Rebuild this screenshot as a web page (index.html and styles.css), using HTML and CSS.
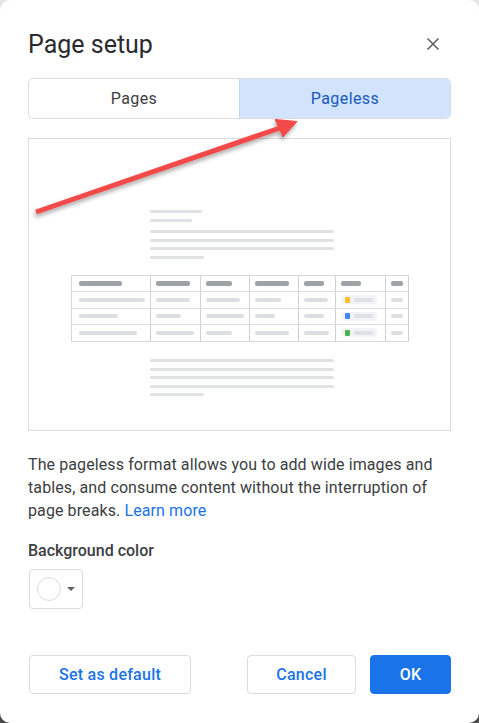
FILE: index.html
```html
<!DOCTYPE html>
<html lang="en">
<head>
<meta charset="utf-8">
<title>Page setup</title>
<link rel="stylesheet" href="styles.css">
</head>
<body>
<div class="dialog">
  <div class="header">
    <h1 class="title">Page setup</h1>
    <button class="close" aria-label="Close">
      <svg width="14" height="14" viewBox="0 0 14 14"><path d="M1.5 1.5 L12.5 12.5 M12.5 1.5 L1.5 12.5" stroke="#5f6368" stroke-width="1.6" fill="none"/></svg>
    </button>
  </div>

  <div class="tabs">
    <div class="tab">Pages</div>
    <div class="tab active">Pageless</div>
  </div>

  <div class="preview">
    <div class="lines lines-top">
      <div class="ln" style="width:52px"></div>
      <div class="ln" style="width:42px"></div>
      <div class="gap"></div>
      <div class="ln" style="width:184px"></div>
      <div class="ln" style="width:184px"></div>
      <div class="ln" style="width:184px"></div>
      <div class="ln" style="width:54px"></div>
    </div>

    <div class="table">
      <div class="cell first"><span class="hb" style="width:43px"></span></div>
      <div class="cell"><span class="hb" style="width:34px"></span></div>
      <div class="cell"><span class="hb" style="width:26px"></span></div>
      <div class="cell"><span class="hb" style="width:34px"></span></div>
      <div class="cell"><span class="hb" style="width:20px"></span></div>
      <div class="cell"><span class="hb" style="width:20px"></span></div>
      <div class="cell"><span class="hb" style="width:12px"></span></div>

      <div class="cell first"><span class="bb" style="width:66px"></span></div>
      <div class="cell"><span class="bb" style="width:34px"></span></div>
      <div class="cell"><span class="bb" style="width:34px"></span></div>
      <div class="cell"><span class="bb" style="width:26px"></span></div>
      <div class="cell"><span class="bb" style="width:24px"></span></div>
      <div class="cell"><span class="chip"><i class="sq yellow"></i><span class="cb"></span></span></div>
      <div class="cell"><span class="bb" style="width:12px"></span></div>

      <div class="cell first"><span class="bb" style="width:39px"></span></div>
      <div class="cell"><span class="bb" style="width:25px"></span></div>
      <div class="cell"><span class="bb" style="width:38px"></span></div>
      <div class="cell"><span class="bb" style="width:20px"></span></div>
      <div class="cell"><span class="bb" style="width:20px"></span></div>
      <div class="cell"><span class="chip"><i class="sq blue"></i><span class="cb"></span></span></div>
      <div class="cell"><span class="bb" style="width:12px"></span></div>

      <div class="cell first"><span class="bb" style="width:58px"></span></div>
      <div class="cell"><span class="bb" style="width:38px"></span></div>
      <div class="cell"><span class="bb" style="width:26px"></span></div>
      <div class="cell"><span class="bb" style="width:34px"></span></div>
      <div class="cell"><span class="bb" style="width:25px"></span></div>
      <div class="cell"><span class="chip"><i class="sq green"></i><span class="cb"></span></span></div>
      <div class="cell"><span class="bb" style="width:12px"></span></div>
    </div>

    <div class="lines lines-bottom">
      <div class="ln" style="width:184px"></div>
      <div class="ln" style="width:184px"></div>
      <div class="ln" style="width:184px"></div>
      <div class="ln" style="width:184px"></div>
      <div class="ln" style="width:54px"></div>
    </div>
  </div>

  <p class="desc">The pageless format allows you to add wide images and tables, and consume content without the interruption of page breaks. <a href="#" class="link">Learn more</a></p>

  <div class="label">Background color</div>
  <button class="color-btn" aria-label="Background color">
    <span class="swatch"></span>
    <span class="caret"></span>
  </button>

  <div class="footer">
    <button class="btn outline">Set as default</button>
    <div class="spacer"></div>
    <button class="btn outline">Cancel</button>
    <button class="btn primary">OK</button>
  </div>

  <svg class="arrow" width="479" height="723" viewBox="0 0 479 723">
    <defs>
      <filter id="sh" x="-20%" y="-50%" width="140%" height="200%">
        <feDropShadow dx="-1" dy="3" stdDeviation="2" flood-color="#000" flood-opacity="0.35"/>
      </filter>
    </defs>
    <g filter="url(#sh)" fill="#f24848" stroke="#f24848">
      <line x1="36" y1="212" x2="280" y2="128" stroke-width="5"/>
      <polygon points="297,121.5 275,119.5 283,137" stroke-width="1" stroke-linejoin="round"/>
    </g>
  </svg>
</div>
</body>
</html>
```

FILE: styles.css
```css
html {
  background: linear-gradient(#e6e6e6, #9a9a9a 40%, #4a4a4a);
}
body {
  margin: 0;
  font-family: Roboto, "Liberation Sans", Arial, sans-serif;
  color: #3c4043;
}
.dialog {
  position: relative;
  box-sizing: border-box;
  width: 479px;
  height: 723px;
  background: #fff;
  border-radius: 10px;
  padding: 26px 28px 0 28px;
}
.header {
  display: flex;
  align-items: center;
  justify-content: space-between;
  height: 36px;
}
.title {
  margin: 0;
  font-family: Roboto, "Open Sans", sans-serif;
  font-weight: 400;
  font-size: 25px;
  color: #2a2b2e;
  letter-spacing: 0;
}
.close {
  border: 0;
  background: none;
  padding: 0;
  margin-right: 11px;
  width: 14px;
  height: 14px;
  display: flex;
}
.tabs {
  margin-top: 16px;
  display: flex;
  height: 41px;
  box-sizing: border-box;
  border: 1px solid #dadce0;
  border-radius: 5px;
  overflow: hidden;
}
.tab {
  flex: 1;
  display: flex;
  align-items: center;
  justify-content: center;
  font-size: 16px;
  letter-spacing: 0.4px;
  color: #3c4043;
  font-weight: 400;
}
.tab.active {
  background: #d2e3fc;
  color: #185abc;
  border-left: 1px solid #c3d6f5;
}
.preview {
  margin-top: 19px;
  height: 293px;
  box-sizing: border-box;
  border: 1px solid #dadce0;
  display: flex;
  flex-direction: column;
  align-items: center;
}
.lines {
  display: flex;
  flex-direction: column;
  gap: 5.5px;
  align-self: flex-start;
  margin-left: 121px;
}
.lines-top {
  margin-top: 71px;
}
.lines .gap {
  height: 0;
  margin-top: -2.5px;
}
.ln {
  height: 3px;
  border-radius: 2px;
  background: #dfe1e5;
}
.table {
  margin-top: 16px;
  display: grid;
  grid-template-columns: 79.6px 49.4px 49.3px 49.3px 36.4px 50px 23.6px;
  grid-auto-rows: 16.5px;
  border-top: 1px solid #d4d6d9;
  border-left: 1px solid #d4d6d9;
  margin-left: 1px;
}
.cell {
  box-sizing: border-box;
  border-right: 1px solid #cfd1d4;
  border-bottom: 1px solid #d9dbde;
  display: flex;
  align-items: center;
  padding-left: 5px;
}
.cell.first {
  padding-left: 7px;
}
.hb {
  display: block;
  height: 4.5px;
  border-radius: 2px;
  background: #9ea2a6;
}
.bb {
  display: block;
  height: 4px;
  border-radius: 2px;
  background: #dcdee1;
}
.chip {
  display: flex;
  align-items: center;
  gap: 4px;
  width: 36px;
  height: 9px;
  box-sizing: border-box;
  padding-left: 4px;
  background: #f1f3f4;
  border-radius: 4px;
}
.sq {
  display: block;
  width: 5px;
  height: 6px;
  border-radius: 1px;
}
.sq.yellow { background: #fbc02d; }
.sq.blue { background: #4285f4; }
.sq.green { background: #4caf50; }
.cb {
  display: block;
  width: 19px;
  height: 4px;
  border-radius: 2px;
  background: #dfe1e4;
}
.lines-bottom {
  margin-top: 17.5px;
}
.desc {
  margin: 22px 0 0 0;
  font-size: 16px;
  line-height: 23px;
  letter-spacing: 0.1px;
  color: #3c4043;
}
.link {
  color: #1a73e8;
  text-decoration: none;
}
.label {
  margin-top: 17px;
  font-size: 16px;
  line-height: 24px;
  font-weight: 500;
  color: #3c4043;
}
.color-btn {
  margin-top: 6px;
  width: 54px;
  height: 40px;
  box-sizing: border-box;
  border: 1px solid #dadce0;
  border-radius: 4px;
  background: #fff;
  display: flex;
  align-items: center;
  padding: 0 0 0 7px;
  gap: 6px;
  margin-left: 1px;
}
.swatch {
  width: 24px;
  height: 24px;
  box-sizing: border-box;
  border: 1px solid #dadce0;
  border-radius: 50%;
  background: #fff;
}
.caret {
  width: 0;
  height: 0;
  border-left: 4px solid transparent;
  border-right: 4px solid transparent;
  border-top: 4px solid #5f6368;
}
.footer {
  margin-top: 46px;
  display: flex;
  align-items: center;
  gap: 14px;
}
.spacer {
  flex: 1;
}
.btn {
  height: 39px;
  box-sizing: border-box;
  border-radius: 4px;
  font-family: Roboto, "Liberation Sans", sans-serif;
  font-size: 16px;
  font-weight: 500;
  letter-spacing: 0.25px;
  padding: 0 26px;
}
.btn.outline {
  background: #fff;
  border: 1px solid #dadce0;
  color: #1a73e8;
}
.footer .btn.outline:first-child {
  width: 162px;
  margin-left: 1px;
}
.footer .btn.outline:nth-child(3) {
  width: 109px;
}
.btn.primary {
  width: 81px;
  background: #1a73e8;
  border: 1px solid #1a73e8;
  color: #fff;
}
.arrow {
  position: absolute;
  left: 0;
  top: 0;
  pointer-events: none;
}
```
